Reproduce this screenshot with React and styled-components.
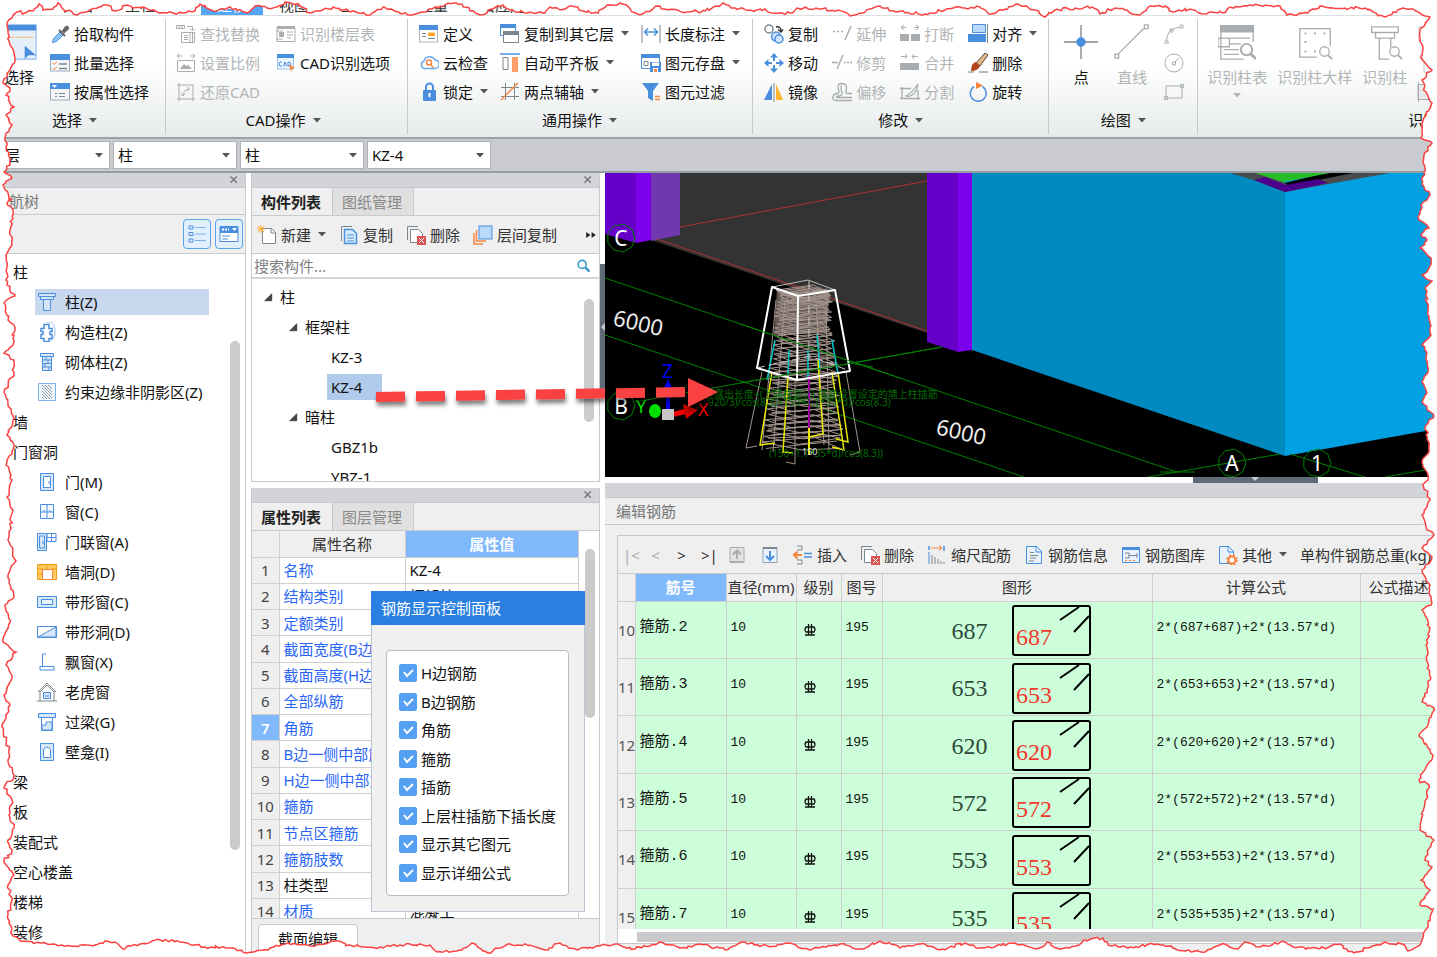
import React, { useState } from 'react';
import styled, { createGlobalStyle } from 'styled-components';

const GlobalStyle = createGlobalStyle`
    * {
        box-sizing: border-box;
    }

    body {
        margin: 0;
        background: #fff;
        font-family: "Noto Sans", "Noto Sans CJK SC", sans-serif;
        font-size: 15px;
        line-height: 20px;
        color: #111;
    }

    button, input, select {
        font: inherit;
        color: inherit;
    }

    ul {
        list-style: none;
        margin: 0;
        padding: 0;
    }
`;

const Page = styled.div`
    position: relative;
    display: flex;
    flex-direction: column;
    height: 100vh;
    overflow: hidden;
    white-space: nowrap;
`;

const TabStrip = styled.nav`
    display: flex;
    align-items: flex-end;
    flex: none;
    height: 16px;
    padding-left: 47px;
    overflow: hidden;
    border-bottom: 1px solid #dcdfe0;
`;

const StripTab = styled.a`
    padding: 0 16px;
    color: ${({ $active }) => ($active ? '#fff' : '#333')};
    background: ${({ $active }) => ($active ? '#55a5f5' : 'none')};
    text-decoration: none;
`;

const Ribbon = styled.header`
    display: flex;
    flex: none;
    height: 123px;
    overflow: hidden;
    background: linear-gradient(#fff 40%, #e7ebeb);
    border-bottom: 2px solid #9da2a6;
`;

const RibbonGroup = styled.section`
    display: flex;
    flex-direction: column;
    flex: none;
    margin: 3px 0;
    padding: 0 ${({ $right = 11 }) => $right}px 0 ${({ $left = 10 }) => $left}px;
    border-right: 1px solid #c6cacb;
`;

const RibbonColumns = styled.div`
    display: flex;
    gap: ${({ $gap = 12 }) => $gap}px;
    height: 89px;
`;

const RibbonColumn = styled.div`
    display: flex;
    flex-direction: column;
`;

const ToolButton = styled.button`
    display: flex;
    align-items: center;
    gap: 4px;
    height: 29px;
    padding: 0;
    border: 0;
    background: none;
    text-align: left;

    &:disabled {
        color: #b2b5b6;
    }
`;

const BigButton = styled.button`
    display: flex;
    flex-direction: column;
    align-items: center;
    gap: 6px;
    padding: 4px 0 0;
    border: 0;
    background: none;

    &:disabled {
        color: #b2b5b6;
    }
`;

const GroupLabel = styled.div`
    display: flex;
    align-items: center;
    justify-content: center;
    gap: 7px;
    height: 30px;
    padding-left: ${({ $indent = 0 }) => $indent}px;
`;

const SelectBar = styled.div`
    display: flex;
    align-items: center;
    flex: none;
    gap: 3px;
    height: 34px;
    background: #c9cbd0;
    border-bottom: 2px solid #979ea2;
`;

const SelectBox = styled.label`
    display: grid;
    align-items: center;
    width: ${({ $width = 124 }) => $width}px;
    height: 28px;
    background: #fff;
    border: 1px solid #aeb2b6;

    select, svg {
        grid-area: 1 / 1;
    }

    select {
        appearance: none;
        width: 100%;
        height: 26px;
        padding: 0 4px;
        border: 0;
        background: none;
    }

    svg {
        justify-self: end;
        margin-right: 6px;
        pointer-events: none;
    }
`;

const Workspace = styled.main`
    display: flex;
    flex: 1;
    min-height: 0;
`;

const NavPanel = styled.aside`
    display: flex;
    flex-direction: column;
    flex: none;
    width: 246px;
    border-right: 1px solid #c8cacd;
`;

const PanelHead = styled.div`
    display: flex;
    align-items: center;
    justify-content: flex-end;
    flex: none;
    height: 15px;
    padding-right: 4px;
    background: #d3d4d9;
    border-bottom: 1px solid #c5c9cd;
`;

const CloseButton = styled.button`
    display: flex;
    padding: 0;
    border: 0;
    background: none;
`;

const PanelTitle = styled.h2`
    flex: none;
    height: 27px;
    margin: 0;
    padding: 3px ${({ $left = 11 }) => $left}px;
    border-bottom: 1px solid #c8cbce;
    background: #efefef;
    color: #777;
    font-size: 15px;
    font-weight: 400;
`;

const NavTools = styled.div`
    display: flex;
    align-items: center;
    justify-content: flex-end;
    flex: none;
    gap: 4px;
    height: 39px;
    padding-right: 2px;
    background: #efefef;
    border-bottom: 1px solid #c8cbce;
`;

const ViewButton = styled.button`
    display: flex;
    align-items: center;
    justify-content: center;
    width: 28px;
    height: 30px;
    padding: 0;
    border: 1px solid #5aa2ee;
    border-radius: 4px;
    background: #e2effc;
`;

const PanelBody = styled.div`
    display: flex;
    flex: 1;
    min-height: 0;
    overflow: hidden;
    background: #fff;
`;

const TreeList = styled.ul`
    flex: 1;
    padding-top: 3px;
`;

const NavRow = styled.li`
    display: flex;
    align-items: center;
    gap: 8px;
    height: 26px;
    margin: 2px 21px 4px ${({ $child }) => ($child ? 35 : 11)}px;
    padding-left: 2px;
    background: ${({ $selected }) => ($selected ? '#c8d8ef' : 'none')};
`;

const ScrollTrack = styled.div`
    flex: none;
    width: 15px;
    margin-left: ${({ $gap = 0 }) => $gap}px;
`;

const ScrollThumb = styled.div`
    width: 10px;
    height: ${({ $size }) => $size}px;
    margin-top: ${({ $from }) => $from}px;
    border-radius: 5px;
    background: #cbcbcb;
`;

const MiddleColumn = styled.div`
    display: flex;
    flex-direction: column;
    flex: none;
    gap: 6px;
    width: 349px;
    margin-left: 5px;
`;

const Panel = styled.section`
    position: relative;
    display: flex;
    flex-direction: column;
    flex: ${({ $height }) => ($height ? 'none' : '1')};
    height: ${({ $height }) => ($height ? `${$height}px` : 'auto')};
    min-height: 0;
    border: 1px solid #c5c9cd;
    border-top: 0;
`;

const PanelTabs = styled.div`
    display: flex;
    flex: none;
    height: 28px;
    background: #efefef;
    border-bottom: 1px solid #c8cbce;
`;

const PanelTab = styled.button`
    padding: 0 11px 0 9px;
    border: 0;
    border-right: 1px solid #c5c9cd;
    background: ${({ $active }) => ($active ? '#efefef' : '#e0e0e0')};
    color: ${({ $active }) => ($active ? '#222' : '#888')};
    font-weight: ${({ $active }) => ($active ? 600 : 400)};
`;

const Toolbar = styled.div`
    display: flex;
    align-items: center;
    flex: none;
    gap: 13px;
    height: 38px;
    padding: 0 2px 0 5px;
    background: #efefef;
    border-bottom: 1px solid #c8cbce;
    color: #333;
`;

const MoreButton = styled.button`
    display: flex;
    margin-left: auto;
    padding: 0;
    border: 0;
    background: none;
`;

const SearchBox = styled.label`
    display: flex;
    align-items: center;
    flex: none;
    height: 25px;
    padding: 0 8px 0 2px;
    background: #fff;
    border-bottom: 2px solid #d3d6d8;

    input {
        flex: 1;
        min-width: 0;
        padding: 0;
        border: 0;
        outline: 0;
    }

    input::placeholder {
        color: #808080;
    }
`;

const TreeRow = styled.li`
    display: flex;
    align-items: center;
    height: 30px;
    gap: 6px;
    padding-left: ${({ $depth, $open }) => 11 + $depth * 25 + ($open ? 0 : 18)}px;

    span {
        padding: 3px ${({ $selected }) => ($selected ? '20px 3px 4px' : '0')};
        margin-left: ${({ $selected }) => ($selected ? '-4px' : '0')};
        background: ${({ $selected }) => ($selected ? '#b1cbed' : 'none')};
    }
`;

const PropTable = styled.table`
    flex: none;
    width: 327px;
    height: 394px;
    border-collapse: collapse;
    table-layout: fixed;

    th, td {
        padding: 0 4px;
        border: 1px solid #cfcfcf;
        border-left: 0;
        font-weight: 400;
        text-align: left;
        overflow: hidden;
    }

    thead th {
        height: 26px;
        background: #efefef;
        color: #333;
        text-align: center;
        border-top: 0;
    }

    thead th:last-child {
        background: #80b9fb;
        color: #fff;
        font-weight: 600;
    }
`;

const RowIndex = styled.th`
    && {
        padding: 0;
        text-align: center;
        color: ${({ $active }) => ($active ? '#fff' : '#444')};
        background: ${({ $active }) => ($active ? '#80b9fb' : '#efefef')};
        font-weight: ${({ $active }) => ($active ? 600 : 400)};
    }
`;

const PropName = styled.td`
    color: ${({ $plain }) => ($plain ? '#111' : '#2a66f5')};
`;

const PanelFooter = styled.div`
    flex: none;
    height: 38px;
    padding: 5px 6px 0;
    background: #efefef;
    border-top: 1px solid #c8cbce;

    button {
        height: 30px;
        padding: 0 19px;
        border: 1px solid #c8cbce;
        border-radius: 4px;
        background: #fff;
    }
`;

const Dialog = styled.section`
    position: absolute;
    top: 103px;
    left: 119px;
    width: 214px;
    height: 321px;
    display: flex;
    flex-direction: column;
    background: #f0f0f0;
    border: 1px solid #bcc5d2;
    border-top: 0;

    h3 {
        flex: none;
        height: 34px;
        margin: 0 -1px;
        padding: 7px 10px;
        background: #2b7fe0;
        color: #fff;
        font-size: 15px;
        font-weight: 400;
    }
`;

const CheckGroup = styled.div`
    display: flex;
    flex-direction: column;
    flex: 1;
    margin: 25px 15px 15px 14px;
    padding: 8px 12px;
    background: #fff;
    border: 1px solid #b9bcc0;
    border-radius: 4px;
`;

const CheckLabel = styled.label`
    display: flex;
    align-items: center;
    flex: 1;
    gap: 4px;
`;

const CheckBox = styled.span`
    display: grid;
    width: 18px;
    height: 18px;

    input, svg {
        grid-area: 1 / 1;
        width: 18px;
        height: 18px;
        margin: 0;
    }

    input {
        appearance: none;
        border: 1px solid #55a0f3;
        border-radius: 2px;
    }

    input:checked {
        background: #55a0f3;
    }

    svg {
        pointer-events: none;
    }
`;

const SideSplitter = styled.div`
    display: flex;
    align-items: center;
    flex: none;
    width: 5px;
    height: 125px;
    margin-top: 91px;
    background: #5f6b78;
`;

const RightColumn = styled.div`
    display: flex;
    flex-direction: column;
    flex: 1;
    min-width: 0;
`;

const Viewport = styled.div`
    flex: none;
    height: 304px;
    background: #000;

    svg {
        display: block;
        width: 100%;
        height: 100%;
    }
`;

const BottomSplitter = styled.div`
    display: flex;
    justify-content: center;
    flex: none;
    height: 6px;
    padding-left: 468px;
    background: #fff;

    div {
        display: flex;
        justify-content: center;
        width: 125px;
        background: #5f6b78;
    }
`;

const EditArea = styled.div`
    display: flex;
    flex-direction: column;
    flex: 1;
    min-height: 0;
    padding: 10px 0 0 12px;
    background: #efefef;
`;

const EditFrame = styled.div`
    flex: none;
    border: 1px solid #c5c9cd;
`;

const NavArrow = styled.button`
    width: 13px;
    padding: 0;
    border: 0;
    background: none;
    text-align: center;

    &:disabled {
        color: #aaa;
    }
`;

const TableClip = styled.div`
    height: 355px;
    overflow: hidden;
`;

const BarTable = styled.table`
    width: 100%;
    height: 372px;
    border-collapse: collapse;
    table-layout: fixed;

    th, td {
        padding: 0;
        border-right: 1px solid #cfcfcf;
        border-bottom: 1px solid #cfcfcf;
        font-weight: 400;
    }

    thead th {
        height: 27px;
        background: #efefef;
        color: #333;
    }

    thead th:nth-child(2) {
        background: #80b9fb;
        color: #fff;
        font-weight: 600;
    }

    thead th:last-child {
        padding-left: 8px;
        text-align: left;
    }

    tbody th {
        background: #efefef;
        color: #555;
    }

    tbody td {
        padding: 0 4px 4px;
        background: #ccffd9;
        font-family: "Liberation Mono", "Noto Sans CJK SC", monospace;
        font-size: 13px;
    }

    tbody td:nth-child(2) {
        font-size: 15px;
    }

    tbody td:nth-child(4), tbody td:nth-child(6) {
        padding-bottom: 0;
    }

    tbody svg {
        display: block;
    }
`;

const Shape = styled.div`
    display: flex;
    align-items: center;
    justify-content: center;
    gap: 24px;
    padding: 2px 0 0 8px;
    color: #2d4a3a;
    font-family: "Liberation Serif", serif;
    font-size: 24px;
`;

const HorizontalBar = styled.div`
    height: 14px;
    padding-top: 3px;
    background: #fff;

    div {
        height: 10px;
        margin-left: 19px;
        background: #cacaca;
    }
`;

const Overlay = styled.svg`
    position: absolute;
    inset: 0;
    width: 100%;
    height: 100%;
    pointer-events: none;
`;

const G = '#a9adaf';
const S = '#7c868e';
const B = '#4a8fdd';
const L = '#d5e6f8';
const O = '#f5853f';

// every drawing lives on a 20 x 20 grid
const drawings = {
    dropper: <><path d="M2.500 18.500l1-4 7-7 3 3-7 7z" fill="#8fc3f5" stroke={B} /><path d="M9 6l6 6M13 7l2.500-3.500q2.500-2 2.500 1L14.500 8z" stroke="#666" fill="#777" strokeWidth="2" /></>,
    batch: <><rect x=".5" y="2" width="19" height="16" fill="#f3f6f9" stroke="#9ab" /><path d="M0 1h20v6H0z" fill={B} /><path d="M2.500 10l1.500 1.500L7 9M2.500 15L4 16.500 7 14" stroke={O} /><path d="M9 11h8M9 15.500h8" stroke={S} strokeWidth="1.500" /></>,
    attrs: <><rect x=".5" y="2" width="19" height="16" fill="#f3f6f9" stroke="#9ab" /><path d="M0 1h20v6H0z" fill={B} /><path d="M2 3h5L4.500 6z" fill="#fff" /><path d="M5 11.500h2M9 11.500h6M5 14.500h2M9 14.500h6" stroke={S} /></>,
    find: <><path d="M.5 1.500h8v3h-8zM3 1.500v3M6 1.500v3M11 2.500h5.500V6M14 4.500l2.500 2.500L19 4.500M5.500 8.500h13v10h-13zM8 11.500h4M8 13.500h4M8 15.500h4M14 9v9M16.500 9v9" stroke={G} /></>,
    scale: <><path d="M1.500 7.500h17v11h-17zM1 3h5M14 3h5M3.500.5L1 3l2.500 2.500M16.500.5L19 3l-2.500 2.500" stroke={G} /><path d="M4 16l4-5 2 2 2-1 4 4z" fill={G} /></>,
    restore: <path d="M3 1v18M1 3h16v16M1 17h18M7 14q0-6 6-7M11 4.500L13.500 7 11 9.500M4.500 11.500L7 14l2-2.500" stroke={G} />,
    floors: <><path d="M1 3.500h18v14H1zM11 8h6M11 11h6M11 14h4" stroke={G} /><path d="M1 2h18v3H1zM3 8h5v5H3z" fill={G} /><path d="M0 7h7M0 15h7" stroke={G} /></>,
    cad: <><rect x="1.500" y="2" width="16" height="14" fill="#eef6ff" stroke="#9bc3f0" /><path d="M1 1h17v4H1z" fill={B} /><path d="M6 9q-3-1-3 2t3 2M7.500 13.500L9 9l1.500 4.500M12 9v4q3 0 3-2t-3-2" stroke={B} /><path d="M13 11l6 4-3 1-1 3z" fill={O} /></>,
    define: <><rect x=".5" y="2" width="18" height="16" fill="#fff" stroke="#aab4bd" /><path d="M0 1h19v5H0z" fill={B} /><path d="M3 9.500h4M3 12.500h4" stroke={S} /><path d="M9 8.500h7v3.500H9z" fill="#ffa726" /><path d="M9 14.500h7" stroke={S} /></>,
    cloud: <><path d="M5 15.500a4 4 0 010-7.500 6 6 0 0111-1 4 4 0 010 8.500z" fill="#fff" stroke="#66a8ef" strokeWidth="1.500" /><circle cx="10" cy="9.500" r="2.500" stroke={O} strokeWidth="1.500" /><path d="M12 12l2.500 2.500" stroke={O} strokeWidth="1.500" /></>,
    lock: <><path d="M7 8V5a3.500 3.500 0 017 0v3" stroke={B} strokeWidth="2" /><rect x="4" y="8" width="13" height="11" rx="1" fill={B} /><path d="M10.500 11v4" stroke="#fff" strokeWidth="2" /></>,
    layers: <><path d="M.5 1.500h15v10H.5z" fill="#fff" stroke={B} /><path d="M0 0h16v4H0z" fill={B} /><path d="M3.500 7.500h15v11h-15z" fill="#fff" stroke={S} /><path d="M3 7h16v4H3z" fill={S} /></>,
    level: <><path d="M0 1h20" stroke={B} strokeWidth="1.500" /><path d="M3 4.500h5v12H3z" stroke={S} /><path d="M12 4h6v15h-6z" fill="#ff9d68" /></>,
    axis: <><path d="M5.500 1v17M14.500 1v17M1 5.500h18M1 14.500h18" stroke={S} /><path d="M1 18L18 1" stroke={O} strokeWidth="1.500" /></>,
    length: <><path d="M1 1v18M19 1v18" stroke={S} /><path d="M3.500 8h13M7 4.500L3.500 8 7 11.500M13 4.500L16.500 8 13 11.500" stroke={B} strokeWidth="1.500" /></>,
    save: <><path d="M.5 2.500h18v13H.5z" fill="#fff" stroke={B} /><path d="M0 1h19v4H0z" fill={B} /><path d="M3 8.500h4v4H3z" stroke={S} /><path d="M9 9h11v10H9z" fill={B} /><path d="M11 9.500h7v3.500h-7zM12 15h5v4h-5z" fill="#fff" /><path d="M13 16h3v3h-3z" fill={O} /></>,
    filter: <><path d="M1 1h17l-6 8v10l-5-3V9z" fill={B} /><path d="M14 14.500h5M14 17.500h5" stroke={O} strokeWidth="1.500" /></>,
    copyCad: <><circle cx="5" cy="5" r="4" stroke={S} strokeWidth="1.500" /><path d="M12 3q5-1 5 4M14 5.500L17 8l2-2.500" stroke="#333" strokeWidth="1.500" /><circle cx="12" cy="12.500" r="4.500" fill="#cfe4fb" stroke={B} strokeWidth="1.500" /><circle cx="15" cy="15" r="4" fill="#cfe4fb" stroke={B} strokeWidth="1.500" /></>,
    move: <path d="M10 0l4 4.500h-3V8H9V4.500H6zM10 20l-4-4.500h3V12h2v3.500h3zM0 10l4.500-4v3H8v2H4.500v3zM20 10l-4.500 4v-3H12V9h3.500V6z" fill={B} />,
    mirror: <><path d="M8 2v16H0z" fill={B} /><path d="M12 2v16h7z" fill="#ffb52e" /><path d="M10 1v19" stroke={S} /></>,
    extend: <path d="M1 7.500h2M5 7.500h2M9 7.500h2M13 16l6-14" stroke={G} strokeWidth="1.500" />,
    trim: <path d="M0 9.500h6M5 16l6-14M12 9.500h2M15 9.500h2M18 9.500h2" stroke={G} strokeWidth="1.500" />,
    offset: <path d="M20 18.500H3q-3-1-2-4 1-3 5-3 1 0 1-2Q4 1.500 10 1.500t4 7.500q-1 2 1 2.500h5M20 15.500H5q-1-1 1-1.500 4 0 4-3-2-7 0-7" stroke={G} strokeWidth="1.300" />,
    breakUp: <><path d="M0 10h9v7H0zM11 10h9v7h-9z" fill={G} /><path d="M1 3.500h5M4 1L1 3.500 4 6M14 3.500h5M16 1l3 2.500L16 6" stroke={G} /></>,
    merge: <><path d="M0 10h9v7H0zM9 10h10v7H9z" fill={G} /><path d="M1 3.500h6M5 1l2 2.500L5 6M18 3.500h-6M14 1l-2 2.500L14 6" stroke={G} /></>,
    split: <path d="M0 6.500h11M2 5v12M0 16.500h20M18 8v10M6 14q5-2 12-12-1 8-6 11-3 2-6 1z" stroke={G} strokeWidth="1.300" />,
    align: <><path d="M4.500.500h13v8h-13z" fill="#b9d9fb" stroke={B} /><path d="M0 10h18v8H0z" fill={B} /><path d="M19.500 0v19" stroke={S} /></>,
    brush: <><path d="M17 0l3 2-8 11-4-3z" fill="#e0b88a" stroke="#5a4633" /><path d="M8 9q-5 1-5 9 7 0 9-5z" fill="#b5441c" /><path d="M0 19h6M11 19h9" stroke="#777" /></>,
    rotate: <><path d="M6 4.500a8 8 0 108.500 0" stroke={B} strokeWidth="1.500" /><path d="M8 0l7 3.500L8 7z" fill={O} /></>,
    newDoc: <><path d="M5.500 3.500h9l4 4v11h-13z" fill="#fff" stroke={S} /><path d="M14 3v5h5" stroke={S} /><path d="M4 0v8M0 4h8M1 1l6 6M7 1L1 7" stroke="#ffa726" /></>,
    copyDoc: <><path d="M2.500 16V1.500H13" stroke={S} /><path d="M5.500 4.500h8l4 4v10h-12z" fill="#d9eafc" stroke={B} strokeWidth="1.500" /><path d="M8 10h7M8 13h7M8 16h7" stroke={B} /></>,
    delDoc: <><path d="M1.500 15V1.500H12" stroke={S} /><path d="M4.500 4.500h8l4 4v9h-12z" fill="#fff" stroke={S} /><path d="M11 11h9v9h-9z" fill="#dc5356" /><path d="M13 13l5 5M18 13l-5 5" stroke="#fff" /></>,
    floorCopy: <><path d="M1 8v11h9" stroke={O} strokeWidth="1.500" /><path d="M3.500 5v11H13" stroke={O} strokeWidth="1.500" /><rect x="6" y="1" width="13" height="13" fill="#b9d9fb" stroke={B} /></>,
    upload: <><path d="M3 2.500h14v15H3z" fill="#e2e2e2" stroke={G} /><path d="M3 17h14" stroke={G} strokeWidth="2" /><path d="M10 14V6M6 9.500l4-4 4 4" stroke={G} strokeWidth="2" /></>,
    download: <><path d="M3 2.500h14v15H3z" fill="#eaf3fd" stroke="#8fa3b5" /><path d="M3 3h14" stroke={S} strokeWidth="2" /><path d="M10 6v8M6 11l4 4 4-4" stroke={B} strokeWidth="2" /></>,
    insert: <><path d="M4 1h5v4H4M4 19h5v-4H4" stroke={S} /><path d="M1 10h8M4.500 6.500L1 10l3.500 3.500" stroke={O} strokeWidth="2" /><path d="M11 8.500h8M11 12h8" stroke={B} strokeWidth="1.500" /></>,
    ruler: <><path d="M2 1v4M17 1v5" stroke={B} strokeWidth="1.500" /><path d="M2 7v12" stroke={B} /><path d="M4 3h11M12 .5L15 3l-3 2.500" stroke={O} /><path d="M5 10v9M8 12v7M11 14v5M14 16v3M17 17v2" stroke={S} /></>,
    info: <><path d="M2.500 1.500h10l5 5v12h-15z" fill="#e7f2fe" stroke={B} /><path d="M12 1v6h6" stroke={B} /><path d="M6 7.500h4M6 10.500h8M6 13h6M5 16h5" stroke={S} /></>,
    library: <><path d="M1.500 2.500h17v15h-17z" fill="#e7f2fe" stroke={B} /><path d="M1 2h18v3H1z" fill={B} /><path d="M4 8h4v5H4M8 10.500h8M16 8v5" stroke={S} /><path d="M4 15.500h12" stroke={O} strokeDasharray="2" /></>,
    other: <><path d="M1.500 1.500h9l5 5v12h-14z" fill="#e7f2fe" stroke={B} /><path d="M10 1v6h6" stroke={B} /><circle cx="14" cy="15" r="3.500" fill="#fff" stroke={O} strokeWidth="2" /><circle cx="14" cy="15" r="5" stroke={O} strokeWidth="1.500" strokeDasharray="2 2" /></>,
    column: <><path d="M1.500 1.500h17v3h-17zM3.500 4.500h13v3h-13zM6.500 7.500h7v11h-7z" fill={L} stroke={B} /></>,
    tie: <><path d="M9 0h5q3 2 3 5l1 1v7l-2 4-3 2" stroke="#9cc4f2" /><path d="M7 2.500h5v4h3v3h-2v3h2v4h-3v3H7v-3H4v-4h2v-3H4v-3h3z" fill="#fff" stroke={B} strokeWidth="1.500" /></>,
    masonry: <><path d="M3.500 1.500h13v3h-13zM5.500 4.500h9v14h-9z" fill={L} stroke={B} /><path d="M6 8h8M6 11.500h8M6 15h8M9 5v3M11 8v3M8 11v4M12 15v3" stroke={B} /></>,
    hatch: <><path d="M1.500 1.500h17v17h-17z" fill="#f1f7fe" stroke="#7db1ec" /><path d="M5 3l10 10M5 6l10 10M5 9l8 8M8 3l7 7M11 3l4 4M5 12l5 5M5 15l2 2" stroke={S} strokeWidth=".8" /></>,
    door: <><path d="M3.500 1.500h13v17h-13z" fill={L} stroke={B} /><path d="M6.500 4.500h7v11h-7z" fill="#fff" stroke={B} /><path d="M12 9v3" stroke={B} /></>,
    window: <path d="M3.500 2.500h13v14h-13zM10 3v14M4 10h12M7 10v-2M13 10v-2" fill="#f4f9ff" stroke={B} />,
    doorWindow: <><path d="M.5 1.500h9v17h-9z" fill={L} stroke={B} /><path d="M2.500 4h5v12h-5zM10 1.500h9v8h-9zM14.500 1v8M10 5.500h9M6 9v3" stroke={B} /></>,
    wallHole: <><path d="M.5 2.500h19v15H.5z" fill="#ffcb5c" stroke="#f29a1f" /><path d="M1 7h5M14 7h5M1 12h5M10 3v4" stroke="#f29a1f" /><path d="M5.500 7.500h10v10h-10z" fill="#fff" stroke={O} /></>,
    strip: <><path d="M.5 4.500h19v11H.5z" fill={L} stroke={B} /><path d="M4.500 7.500h11v5h-11z" fill="#e9f3fd" stroke={B} /></>,
    stripHole: <><path d="M.5 4.500h19v11H.5z" fill="#fff" stroke={B} /><path d="M1 15L19 5v10z" fill={L} stroke={B} /></>,
    bay: <path d="M9 2H5.500v12M3 14.500h14v3.500H3z" fill="#fff" stroke={B} />,
    dormer: <><path d="M1 10L10 1l9 9M3 9v10M17 9v10M0 19h20" stroke={S} /><path d="M3 10L10 3l7 7" stroke={S} /><path d="M6.500 10.500h7v6h-7zM8 14h4" fill={L} stroke={B} /></>,
    lintel: <><path d="M1.500 1.500h17v4h-17z" fill={L} stroke={B} /><path d="M4.500 5.500h11v13h-11z" fill="#fff" stroke={B} /><path d="M5 17v-4h4v-3h6v8H5z" fill={L} stroke={B} /></>,
    niche: <><path d="M3.500 1.500h13v17h-13z" fill={L} stroke={B} /><path d="M6.500 15.500V8q3.500-6 7 0v7.500z" fill="#fff" stroke={B} /></>,
    listView: <><path d="M2 2h4v3H2zM2 8.500h4v3H2zM2 15h4v3H2z" stroke={B} /><path d="M8 3.500h11M8 10h11M8 16.500h11" stroke="#79b2ef" /></>,
    cardView: <><path d="M1 2.500h18v15H1z" fill="#fff" stroke={B} /><path d="M1 2h18v7H1z" fill={B} /><path d="M3 5.500h7" stroke="#fff" strokeWidth="2" strokeDasharray="2 1" /><path d="M13 4h5l-2.500 3z" fill="#fff" /><path d="M3 12h8M3 15h6" stroke={B} /></>,
    search: <><circle cx="9" cy="8" r="5" stroke="#3498c8" strokeWidth="2" /><path d="M13 12l5 5" stroke="#3498c8" strokeWidth="3" /></>,
    close: <path d="M5 5l9 9M14 5l-9 9" stroke="#777" strokeWidth="2" />,
    more: <path d="M2 5l7 5-7 5zM11 5l7 5-7 5z" fill="#222" />,
    node: <path d="M16 3v13H3z" fill="#444" stroke="#222" />,
    dot: <><path d="M10 1v18M1 10h18" stroke={S} strokeWidth=".7" /><circle cx="10" cy="10" r="2.500" fill={B} /></>,
    line: <path d="M2.500 16.500L16 3M1 16.500h2v2H1zM16.500 1h2v2h-2z" stroke={G} strokeWidth=".7" />,
    arc: <path d="M2.500 17q0-12 13-14M1 17h3v3H1zM16 1h3v3h-3zM6 5h3v3H6z" stroke={G} />,
    circle: <path d="M10 1a9 9 0 100 18 9 9 0 100-18M8.500 9h3v3h-3zM11 9l4-4" stroke={G} />,
    rect: <path d="M2 4h16v12H2zM.5 14.500h3v3h-3zM16.500 2.500h3v3h-3z" stroke={G} />,
    select: <><path d="M0 1h19v18H0z" fill="#e6f0fb" stroke="#8fbcef" strokeWidth=".6" /><path d="M0 1h19v3H0z" fill={B} /><path d="M0 7.500h18" stroke="#fba62a" strokeDasharray="1 .6" strokeWidth=".6" /><path d="M13 12v7l2-2h4z" fill={B} /></>,
    pillarTable: <><path d="M1 1h18v4H1z" fill={G} /><path d="M1.500 5v14h12M18.500 5v5M3 8h14M6 11h6M3 14h8M3 16.500h8M0 8h6v4.500H0z" stroke={G} strokeWidth=".7" /><circle cx="15" cy="14" r="3" stroke={G} fill="#fff" /><path d="M17 16l3 3" stroke={G} strokeWidth="1.500" /></>,
    pillarDetail: <><path d="M11 18H2V3h16v9" stroke={G} strokeWidth=".7" /><path d="M4.500 5.500h1M9.500 5.500h1M14.500 5.500h1M4.500 10h1M4.500 15h1M9.500 15h1" stroke={G} /><circle cx="15" cy="15" r="2.500" stroke={G} strokeWidth=".7" /><path d="M17 17l2 2" stroke={G} /></>,
    pillar: <><path d="M3 2h14v3H3zM5 5h10v3H5zM7 8v11h5M13 8v5" stroke={G} strokeWidth=".7" /><circle cx="15" cy="15" r="2.500" stroke={G} strokeWidth=".7" /><path d="M17 17l2 2" stroke={G} /></>,
    sheet: <><path d="M1 2.500h18v15H1z" fill="#e6e8e9" stroke={G} /><path d="M1.500 0v20" stroke={G} /></>,
};

const Icon = ({ name, size = 20 }) => (
    <svg width={size} height={size} viewBox="0 0 20 20" fill="none" aria-hidden="true">
        {drawings[name]}
    </svg>
);

const Arrow = ({ color = '#555' }) => (
    <svg width="8" height="5" viewBox="0 0 8 5" aria-hidden="true">
        <path d="M0 0h8L4 4.500z" fill={color} />
    </svg>
);

const DropArrow = styled.span`
    display: flex;
    margin-left: 3px;
`;

const Tool = ({ icon, text, label, drop, disabled }) => (
    <ToolButton disabled={disabled} aria-label={label}>
        <Icon name={icon} />
        {text}
        {drop && <DropArrow><Arrow /></DropArrow>}
    </ToolButton>
);

const Big = ({ icon, text, disabled, drop }) => (
    <BigButton disabled={disabled}>
        <Icon name={icon} size={38} />
        {text}
        {drop && <Arrow color="#b2b5b6" />}
    </BigButton>
);

const Group = ({ label, left, right, gap, indent, columns, children }) => (
    <RibbonGroup $left={left} $right={right}>
        <RibbonColumns $gap={gap}>
            {children}
            {columns.map((column, index) => (
                <RibbonColumn key={index}>
                    {column.map((tool) => <Tool key={tool.icon} {...tool} />)}
                </RibbonColumn>
            ))}
        </RibbonColumns>
        <GroupLabel $indent={indent}>{label}<Arrow /></GroupLabel>
    </RibbonGroup>
);

const selectColumns = [[
    { icon: 'dropper', text: '拾取构件' },
    { icon: 'batch', text: '批量选择' },
    { icon: 'attrs', text: '按属性选择' },
]];

const cadColumns = [
    [
        { icon: 'find', text: '查找替换', disabled: true },
        { icon: 'scale', text: '设置比例', disabled: true },
        { icon: 'restore', text: '还原CAD', disabled: true },
    ],
    [
        { icon: 'floors', text: '识别楼层表', disabled: true },
        { icon: 'cad', text: 'CAD识别选项' },
    ],
];

const commonColumns = [
    [
        { icon: 'define', text: '定义' },
        { icon: 'cloud', text: '云检查' },
        { icon: 'lock', text: '锁定', drop: true },
    ],
    [
        { icon: 'layers', text: '复制到其它层', drop: true },
        { icon: 'level', text: '自动平齐板', drop: true },
        { icon: 'axis', text: '两点辅轴', drop: true },
    ],
    [
        { icon: 'length', text: '长度标注', drop: true },
        { icon: 'save', text: '图元存盘', drop: true },
        { icon: 'filter', text: '图元过滤' },
    ],
];

const modifyColumns = [
    [
        { icon: 'copyCad', text: '复制' },
        { icon: 'move', text: '移动' },
        { icon: 'mirror', text: '镜像' },
    ],
    [
        { icon: 'extend', text: '延伸', disabled: true },
        { icon: 'trim', text: '修剪', disabled: true },
        { icon: 'offset', text: '偏移', disabled: true },
    ],
    [
        { icon: 'breakUp', text: '打断', disabled: true },
        { icon: 'merge', text: '合并', disabled: true },
        { icon: 'split', text: '分割', disabled: true },
    ],
    [
        { icon: 'align', text: '对齐', drop: true },
        { icon: 'brush', text: '删除' },
        { icon: 'rotate', text: '旋转' },
    ],
];

const drawColumns = [[
    { icon: 'arc', label: '弧线', disabled: true },
    { icon: 'circle', label: '圆', disabled: true },
    { icon: 'rect', label: '矩形', disabled: true },
]];

const pillarColumns = [[
    { icon: 'pillarDetail', label: '校核柱大样', disabled: true },
    { icon: 'pillar', label: '校核柱图元', disabled: true },
    { icon: 'sheet', label: '填充识别柱', disabled: true },
]];

const navItems = [
    { text: '柱' },
    { text: '柱(Z)', icon: 'column', selected: true },
    { text: '构造柱(Z)', icon: 'tie' },
    { text: '砌体柱(Z)', icon: 'masonry' },
    { text: '约束边缘非阴影区(Z)', icon: 'hatch' },
    { text: '墙' },
    { text: '门窗洞' },
    { text: '门(M)', icon: 'door' },
    { text: '窗(C)', icon: 'window' },
    { text: '门联窗(A)', icon: 'doorWindow' },
    { text: '墙洞(D)', icon: 'wallHole' },
    { text: '带形窗(C)', icon: 'strip' },
    { text: '带形洞(D)', icon: 'stripHole' },
    { text: '飘窗(X)', icon: 'bay' },
    { text: '老虎窗', icon: 'dormer' },
    { text: '过梁(G)', icon: 'lintel' },
    { text: '壁龛(I)', icon: 'niche' },
    { text: '梁' },
    { text: '板' },
    { text: '装配式' },
    { text: '空心楼盖' },
    { text: '楼梯' },
    { text: '装修' },
];

const componentTree = [
    { text: '柱', depth: 0, open: true },
    { text: '框架柱', depth: 1, open: true },
    { text: 'KZ-3', depth: 2 },
    { text: 'KZ-4', depth: 2, selected: true },
    { text: '暗柱', depth: 1, open: true },
    { text: 'GBZ1b', depth: 2 },
    { text: 'YBZ-1', depth: 2 },
];

const properties = [
    ['名称', 'KZ-4'], ['结构类别', '框架柱'], ['定额类别', ''], ['截面宽度(B边)', ''],
    ['截面高度(H边)', ''], ['全部纵筋', ''], ['角筋', ''], ['B边一侧中部筋', ''],
    ['H边一侧中部筋', ''], ['箍筋', ''], ['节点区箍筋', ''], ['箍筋肢数', ''],
    ['柱类型', ''], ['材质', '混凝土'],
];

const displayOptions = [
    'H边钢筋', 'B边钢筋', '角筋', '箍筋', '插筋',
    '上层柱插筋下插长度', '显示其它图元', '显示详细公式',
];

const bars = [
    { no: 10, name: '箍筋.2', size: 687 },
    { no: 11, name: '箍筋.3', size: 653 },
    { no: 12, name: '箍筋.4', size: 620 },
    { no: 13, name: '箍筋.5', size: 572 },
    { no: 14, name: '箍筋.6', size: 553 },
    { no: 15, name: '箍筋.7', size: 535 },
];

const DropDown = ({ label, value, width }) => (
    <SelectBox $width={width}>
        <select aria-label={label} defaultValue={value}>
            <option>{value}</option>
        </select>
        <Arrow />
    </SelectBox>
);

const Head = () => (
    <PanelHead>
        <CloseButton aria-label="关闭"><Icon name="close" size={14} /></CloseButton>
    </PanelHead>
);

const DisplayDialog = () => {
    const [checked, setChecked] = useState(displayOptions);

    const toggle = (option) => {
        setChecked(checked.includes(option)
            ? checked.filter((item) => item !== option)
            : [...checked, option]);
    };

    return (
        <Dialog>
            <h3>钢筋显示控制面板</h3>
            <CheckGroup>
                {displayOptions.map((option) => (
                    <CheckLabel key={option}>
                        <CheckBox>
                            <input
                                type="checkbox"
                                checked={checked.includes(option)}
                                onChange={() => toggle(option)}
                            />
                            <svg viewBox="0 0 18 18" fill="none">
                                <path d="M5 8l3 4 6-6" stroke="#fff" strokeWidth="2" />
                            </svg>
                        </CheckBox>
                        {option}
                    </CheckLabel>
                ))}
            </CheckGroup>
        </Dialog>
    );
};

const noise = (n) => {
    const value = Math.sin(n * 127.1) * 43758.5;
    return value - Math.floor(value);
};

// stirrups widen from the top of the column to its foot, and thin out there
const stirrups = Array.from({ length: 36 }, (_, i) => {
    const t = (i / 35) ** 1.3;
    const y = 290 + t * 152;
    const left = 776 - t * 15 + noise(i) * 6;
    const right = 832 + t * 14 - noise(i + 50) * 6;
    const front = 792 + noise(i + 9) * 14;
    const tilt = noise(i + 30) * 7;
    return `M${left} ${y}L${front} ${y + 8}L${right} ${y + tilt}L${808 + tilt} ${y - 5}ZM${left + 4} ${y + tilt}L${right - 3} ${y - 1}`;
}).join('');

const octagon = (cx, cy, r) => Array.from({ length: 9 }, (_, i) => {
    const angle = (i * Math.PI) / 4.500;
    return `${cx + r * Math.cos(angle)},${cy + r * Math.sin(angle)}`;
}).join(' ');

const axisMarks = [['C', 621, 238], ['B', 621, 406], ['A', 1232, 463], ['1', 1317, 463]];

const Scene = () => (
    <svg viewBox="605 173 832 304" preserveAspectRatio="xMinYMin slice" fill="none" fontFamily="Noto Sans, Noto Sans CJK SC, sans-serif">
        <path d="M651 173H927V333L651 240z" fill="#333" />
        <path d="M605 173h31v70l-31-9z" fill="#6600c8" />
        <path d="M636 173h15v67l-15 3z" fill="#7a00ee" />
        <path d="M651 173h29v62l-29 6z" fill="#7038ac" />
        <path d="M680 227L927 181M657 239L927 331" stroke="#b13232" />
        <path d="M972 173h313v283L972 350z" fill="#008ac0" />
        <path d="M1285 173h152v256l-152 27z" fill="#00a0e2" />
        <path d="M927 173h31v179l-31-10z" fill="#6600c8" />
        <path d="M958 173h14v177l-14 2z" fill="#7a00ee" />
        <path d="M1230 173h30l25 10 60-10h45l-62 11-43 8-31-12z" fill="#4b4b4b" />
        <path d="M1285 183l40-10h28l-64 13z" fill="#000" />
        <path d="M1255 173h75l-47 9z" fill="#27bd27" />
        <path d="M1254 180l11-3 21 8 32-6 10 4-43 9z" fill="#4a008c" />
        <path d="M605 278L1177 472M605 335L1024 477M635 402L942 347M1148 477L1280 454M1290 454L1365 477M1160 472h35M1385 477L1437 468" stroke="#008000" />
        {axisMarks.map(([label, x, y]) => (
            <g key={label}>
                <polygon points={octagon(x, y, 14)} stroke="#008000" />
                <text x={x} y={y + 8} fontSize="21" fill="#fff" textAnchor="middle">{label}</text>
            </g>
        ))}
        <text transform="translate(612 325) rotate(13)" fontSize="22" fill="#eee">6000</text>
        <text transform="translate(935 434) rotate(13)" fontSize="22" fill="#eee">6000</text>
        <path d="M777 290l43-3 10 6-4 40-52 2z" fill="#a3938c" opacity=".6" />
        <path d={stirrups} stroke="#a3938c" />
        <path d="M762 372L746 448l11-2M795 380v84l-9-2M846 372l14 80-10 3M776 300l-14 150M826 300l3 150M785 300l-12 152M816 300l8 145" stroke="#a3938c" />
        <path d="M775 340l-8 40M789 350l-1 24M817 335l3 34M808 350v28M832 340l6 34" stroke="#00c8c8" strokeWidth="1.500" />
        <path d="M772 372l-12 73 15-2M788 376l-5 76 10 1M838 372l10 70-12-3M832 372l12 78-12-3M818 360l5 74-14 3" stroke="#e8e800" strokeWidth="1.500" />
        <path d="M809 376v52" stroke="#a000a0" strokeWidth="2" />
        <path d="M809 428v27" stroke="#e8e800" strokeWidth="2" />
        <path d="M772 287l36-7 27 10" stroke="#bbb" />
        <path d="M809 281v79M757 368l53-12 40 15" stroke="#ccc" strokeDasharray="8 4" />
        <path d="M772 287l26 9 37-6 15 81-53 9-40-12zM798 296l-1 84" stroke="#fff" strokeWidth="2" strokeLinejoin="round" />
        <path d="M740 383L942 347M740 324L900 378M855 364l18 3" stroke="#008000" />
        <g fill="#006c00" fontSize="10">
            <text x="704" y="398">层露出长度+(上层柱高)/3 插筋设置设定的墙上柱插筋</text>
            <text x="708" y="406">920/3)/cos(8.3)+150*1.1*35*d)/cos(8.3)</text>
            <text x="769" y="457">(150+1.1*35*d)/cos(8.3))</text>
        </g>
        <text x="802" y="455" fontSize="9" fill="#ddd">150</text>
        <path d="M668 412V386" stroke="#0000e8" strokeWidth="4" />
        <path d="M663 390l5-11 5 11z" fill="#0000e8" />
        <path d="M670 415l18-4" stroke="#f00000" strokeWidth="5" />
        <path d="M683 404l15 6-12 9z" fill="#d00000" />
        <ellipse cx="655" cy="411" rx="6" ry="7" fill="#00e000" />
        <path d="M662 409h12v11h-12z" fill="#c6c6c6" />
        <text x="662" y="378" fontSize="19" fill="#0000f0">Z</text>
        <text x="636" y="413" fontSize="18" fill="#00e000">Y</text>
        <text x="698" y="416" fontSize="18" fill="#f00000">X</text>
    </svg>
);

const tear = [
    [7, 23], [12, 18], [17, 12], [25, 13], [33, 11], [39, 4], [43, 10], [53, 9], [58, 3], [63, 9], [77, 15], [90, 10], [107, 5], [115, 11],
    [127, 5], [133, 8], [143, 7], [157, 12], [167, 13], [192, 12], [200, 4], [213, 11], [230, 7], [247, 13], [255, 6], [267, 8], [277, 7],
    [285, 2], [300, 6], [310, 13], [320, 11], [333, 7], [353, 11], [370, 15], [383, 7], [400, 13], [412, 15], [432, 9], [448, 3], [462, 4],
    [470, 11], [480, 15], [492, 9], [503, 5], [510, 10], [530, 12], [545, 13], [550, 7], [560, 10], [572, 6], [583, 11], [598, 13], [607, 5],
    [622, 4], [640, 15], [657, 6], [668, 10], [687, 12], [705, 11], [723, 3], [735, 8], [750, 10], [765, 9], [772, 13], [790, 13], [797, 8],
    [822, 9], [838, 10], [850, 16], [862, 13], [873, 8], [880, 6], [893, 11], [925, 14], [945, 10], [960, 7], [968, 9], [977, 6], [992, 14],
    [1005, 9], [1018, 4], [1035, 10], [1045, 17], [1055, 10], [1075, 8], [1092, 7], [1100, 14], [1115, 8], [1125, 10], [1140, 15], [1150, 6],
    [1165, 6], [1173, 12], [1190, 9], [1200, 13], [1223, 13], [1230, 7], [1250, 5], [1280, 6], [1287, 15], [1308, 13], [1320, 6], [1345, 8],
    [1365, 8], [1385, 17], [1393, 12], [1403, 8], [1413, 9], [1425, 16], [1430, 17], [1421, 28], [1420, 38], [1423, 48], [1421, 58],
    [1432, 70], [1422, 80], [1426, 92], [1432, 103], [1424, 118], [1421, 138], [1432, 143], [1424, 155], [1424, 172], [1422, 184],
    [1430, 195], [1421, 205], [1419, 220], [1429, 228], [1421, 235], [1427, 240], [1420, 248], [1431, 258], [1429, 268], [1422, 275],
    [1432, 281], [1425, 288], [1428, 310], [1431, 335], [1422, 345], [1427, 353], [1428, 372], [1422, 382], [1427, 393], [1422, 402],
    [1434, 416], [1426, 425], [1429, 452], [1422, 462], [1428, 480], [1423, 485], [1430, 500], [1422, 515], [1427, 530], [1434, 535],
    [1422, 548], [1432, 557], [1422, 570], [1430, 585], [1431, 605], [1422, 610], [1430, 628], [1426, 645], [1430, 680], [1422, 702],
    [1434, 708], [1428, 725], [1419, 735], [1433, 755], [1419, 780], [1429, 785], [1421, 822], [1420, 830], [1434, 840], [1425, 860],
    [1432, 867], [1421, 880], [1430, 890], [1420, 905], [1433, 909], [1428, 925], [1420, 945], [1408, 951], [1402, 944], [1385, 942],
    [1367, 948], [1354, 953], [1340, 944], [1320, 949], [1293, 947], [1285, 942], [1260, 947], [1245, 942], [1238, 949], [1222, 944],
    [1205, 952], [1185, 951], [1157, 944], [1130, 947], [1112, 946], [1103, 938], [1085, 940], [1070, 948], [1057, 948], [1047, 942],
    [1037, 949], [1015, 943], [980, 948], [965, 943], [940, 950], [920, 944], [900, 948], [880, 941], [860, 949], [840, 944], [810, 950],
    [790, 943], [770, 947], [745, 942], [725, 950], [700, 944], [680, 948], [660, 942], [635, 949], [615, 944], [600, 946], [575, 949],
    [560, 943], [545, 950], [530, 945], [510, 944], [488, 953], [472, 943], [462, 950], [437, 952], [430, 945], [400, 945], [375, 948],
    [350, 945], [335, 941], [325, 944], [310, 946], [285, 944], [270, 948], [247, 953], [232, 948], [205, 947], [180, 942], [160, 940],
    [140, 944], [123, 949], [118, 944], [105, 941], [92, 946], [62, 945], [40, 943], [20, 941], [13, 936], [8, 915], [12, 900], [8, 885],
    [14, 875], [4, 862], [12, 850], [8, 840], [14, 828], [9, 815], [12, 800], [4, 788], [14, 775], [8, 760], [9, 750], [2, 727], [10, 705],
    [4, 695], [12, 678], [6, 665], [16, 652], [3, 642], [10, 620], [5, 605], [14, 597], [8, 575], [16, 561], [8, 540], [13, 510], [7, 497],
    [12, 480], [6, 465], [14, 445], [7, 435], [14, 418], [8, 405], [4, 392], [14, 372], [14, 360], [4, 353], [13, 345], [14, 325],
    [8, 320], [4, 303], [15, 296], [7, 285], [6, 255], [12, 245], [10, 230], [13, 210], [7, 203], [12, 200], [3, 185], [12, 178], [4, 172],
    [10, 165], [5, 138], [12, 125], [6, 115], [14, 107], [6, 95], [10, 88], [3, 83], [15, 60], [10, 45], [8, 30],
];

const tearPath = `${tear.map(([x, y], i) => {
    const [nx, ny] = tear[(i + 1) % tear.length];
    const steps = Math.max(1, Math.round(Math.hypot(nx - x, ny - y) / 3));
    return Array.from({ length: steps }, (_, s) => {
        const px = x + ((nx - x) * s) / steps + (s ? (noise(i * 7 + s) - 0.5) * 3 : 0);
        const py = y + ((ny - y) * s) / steps + (s ? (noise(i * 11 + s) - 0.5) * 3 : 0);
        return `${i || s ? 'L' : 'M'}${px.toFixed(1)} ${py.toFixed(1)}`;
    }).join('');
}).join('')}Z`;

const Annotations = () => (
    <Overlay viewBox="0 0 1437 957" preserveAspectRatio="none" fill="none">
        <defs>
            <filter id="drop" x="-5%" y="-200%" width="110%" height="500%" filterUnits="objectBoundingBox">
                <feDropShadow dx="1" dy="4" stdDeviation="2" floodOpacity="0.5" />
            </filter>
        </defs>
        <g filter="url(#drop)">
            <path d="M376 397L688 392" stroke="#fb4242" strokeWidth="10" strokeDasharray="29 11" />
            <path d="M688 378l30 14-30 15z" fill="#fb4242" />
        </g>
        <path d={`M0 0H1437V957H0Z${tearPath}`} fill="#fff" fillRule="evenodd" />
        <path d={tearPath} stroke="#fb4242" strokeWidth="1.500" />
    </Overlay>
);

const App = () => (
    <>
        <GlobalStyle />
        <Page>
            <TabStrip>
                <StripTab href="#start">开始</StripTab>
                <StripTab href="#setup">工程设置</StripTab>
                <StripTab href="#model" $active>建模</StripTab>
                <StripTab href="#view">视图</StripTab>
                <StripTab href="#tools">工具</StripTab>
                <StripTab href="#quantity">工程量</StripTab>
                <StripTab href="#cloud">云应用</StripTab>
            </TabStrip>

            <Ribbon>
                <Group label="选择" left={0} right={16} columns={selectColumns}>
                    <Big icon="select" text="选择" />
                </Group>
                <Group label="CAD操作" right={17} gap={16} columns={cadColumns} />
                <Group label="通用操作" left={11} right={12} columns={commonColumns} />
                <Group label="修改" left={11} gap={14} columns={modifyColumns} />
                <Group label="绘图" left={13} right={13} gap={13} columns={drawColumns}>
                    <Big icon="dot" text="点" />
                    <Big icon="line" text="直线" disabled />
                </Group>
                <Group label="识别柱" left={9} gap={10} indent={201} columns={pillarColumns}>
                    <Big icon="pillarTable" text="识别柱表" disabled drop />
                    <Big icon="pillarDetail" text="识别柱大样" disabled />
                    <Big icon="pillar" text="识别柱" disabled />
                </Group>
            </Ribbon>

            <SelectBar>
                <DropDown label="楼层" value="层" width={110} />
                <DropDown label="构件类型" value="柱" />
                <DropDown label="构件" value="柱" />
                <DropDown label="名称" value="KZ-4" />
            </SelectBar>

            <Workspace>
                <NavPanel>
                    <Head />
                    <PanelTitle $left={9}>航树</PanelTitle>
                    <NavTools>
                        <ViewButton aria-label="列表"><Icon name="listView" /></ViewButton>
                        <ViewButton aria-label="卡片"><Icon name="cardView" /></ViewButton>
                    </NavTools>
                    <PanelBody>
                        <TreeList>
                            {navItems.map(({ text, icon, selected }) => (
                                <NavRow key={text} $child={!!icon} $selected={selected}>
                                    {icon && <Icon name={icon} />}
                                    {text}
                                </NavRow>
                            ))}
                        </TreeList>
                        <ScrollTrack>
                            <ScrollThumb $from={87} $size={509} />
                        </ScrollTrack>
                    </PanelBody>
                </NavPanel>

                <MiddleColumn>
                    <Panel $height={309}>
                        <Head />
                        <PanelTabs>
                            <PanelTab $active>构件列表</PanelTab>
                            <PanelTab>图纸管理</PanelTab>
                        </PanelTabs>
                        <Toolbar>
                            <Tool icon="newDoc" text="新建" drop />
                            <Tool icon="copyDoc" text="复制" />
                            <Tool icon="delDoc" text="删除" />
                            <Tool icon="floorCopy" text="层间复制" />
                            <MoreButton aria-label="更多"><Icon name="more" size={12} /></MoreButton>
                        </Toolbar>
                        <SearchBox>
                            <input type="text" aria-label="搜索构件" placeholder="搜索构件..." />
                            <Icon name="search" size={16} />
                        </SearchBox>
                        <PanelBody>
                            <TreeList>
                                {componentTree.map(({ text, depth, open, selected }) => (
                                    <TreeRow key={text} $depth={depth} $open={open} $selected={selected}>
                                        {open && <Icon name="node" size={11} />}
                                        <span>{text}</span>
                                    </TreeRow>
                                ))}
                            </TreeList>
                            <ScrollTrack>
                                <ScrollThumb $from={20} $size={123} />
                            </ScrollTrack>
                        </PanelBody>
                    </Panel>

                    <Panel>
                        <Head />
                        <PanelTabs>
                            <PanelTab $active>属性列表</PanelTab>
                            <PanelTab>图层管理</PanelTab>
                        </PanelTabs>
                        <PanelBody>
                            <PropTable>
                                <colgroup>
                                    <col width="27" />
                                    <col width="126" />
                                    <col />
                                </colgroup>
                                <thead>
                                    <tr>
                                        <th aria-label="序号" />
                                        <th>属性名称</th>
                                        <th>属性值</th>
                                    </tr>
                                </thead>
                                <tbody>
                                    {properties.map(([name, value], index) => (
                                        <tr key={name}>
                                            <RowIndex $active={index === 6}>{index + 1}</RowIndex>
                                            <PropName $plain={name === '柱类型'}>{name}</PropName>
                                            <td>{value}</td>
                                        </tr>
                                    ))}
                                </tbody>
                            </PropTable>
                            <ScrollTrack $gap={6}>
                                <ScrollThumb $from={18} $size={169} />
                            </ScrollTrack>
                        </PanelBody>
                        <PanelFooter>
                            <button type="button">截面编辑</button>
                        </PanelFooter>
                        <DisplayDialog />
                    </Panel>
                </MiddleColumn>

                <SideSplitter>
                    <svg width="5" height="8"><path d="M5 0v8L1 4z" fill="#c9cbd0" /></svg>
                </SideSplitter>

                <RightColumn>
                    <Viewport><Scene /></Viewport>
                    <BottomSplitter>
                        <div><svg width="8" height="5"><path d="M0 0h8L4 4z" fill="#c9cbd0" /></svg></div>
                    </BottomSplitter>
                    <PanelHead />
                    <PanelTitle>编辑钢筋</PanelTitle>
                    <EditArea>
                        <EditFrame>
                            <Toolbar>
                                <NavArrow aria-label="首行" disabled>|&lt;</NavArrow>
                                <NavArrow aria-label="上一行" disabled>&lt;</NavArrow>
                                <NavArrow aria-label="下一行">&gt;</NavArrow>
                                <NavArrow aria-label="末行">&gt;|</NavArrow>
                                <Tool icon="upload" label="上移" disabled />
                                <Tool icon="download" label="下移" />
                                <Tool icon="insert" text="插入" />
                                <Tool icon="delDoc" text="删除" />
                                <Tool icon="ruler" text="缩尺配筋" />
                                <Tool icon="info" text="钢筋信息" />
                                <Tool icon="library" text="钢筋图库" />
                                <Tool icon="other" text="其他" drop />
                                <span>单构件钢筋总重(kg)</span>
                            </Toolbar>
                            <TableClip>
                                <BarTable>
                                    <colgroup>
                                        <col width="17" />
                                        <col width="91" />
                                        <col width="70" />
                                        <col width="45" />
                                        <col width="41" />
                                        <col width="270" />
                                        <col width="208" />
                                        <col />
                                    </colgroup>
                                    <thead>
                                        <tr>
                                            <th aria-label="序号" />
                                            <th>筋号</th>
                                            <th>直径(mm)</th>
                                            <th>级别</th>
                                            <th>图号</th>
                                            <th>图形</th>
                                            <th>计算公式</th>
                                            <th>公式描述</th>
                                        </tr>
                                    </thead>
                                    <tbody>
                                        {bars.map(({ no, name, size }) => (
                                            <tr key={no}>
                                                <th>{no}</th>
                                                <td>{name}</td>
                                                <td>10</td>
                                                <td>
                                                    <svg width="18" height="14" viewBox="0 0 18 14" fill="none" stroke="#111">
                                                        <path d="M7.500 1v11M10.500 1v11M4 12h10M5 4h8q2 2.500 0 5H5q-2-2.500 0-5z" strokeWidth="1.300" />
                                                    </svg>
                                                </td>
                                                <td>195</td>
                                                <td>
                                                    <Shape>
                                                        {size}
                                                        <svg width="79" height="51" viewBox="0 0 79 51" fill="none" stroke="#000" strokeWidth="2">
                                                            <rect x="1" y="1" width="77" height="49" rx="2" />
                                                            <path d="M48 15L67 2M62 27L77 11" />
                                                            <text x="4" y="40" fontSize="24" fill="#f0372c" stroke="none">{size}</text>
                                                        </svg>
                                                    </Shape>
                                                </td>
                                                <td>{`2*(${size}+${size})+2*(13.57*d)`}</td>
                                                <td />
                                            </tr>
                                        ))}
                                    </tbody>
                                </BarTable>
                            </TableClip>
                            <HorizontalBar><div /></HorizontalBar>
                        </EditFrame>
                    </EditArea>
                </RightColumn>
            </Workspace>

            <Annotations />
        </Page>
    </>
);

export default App;
